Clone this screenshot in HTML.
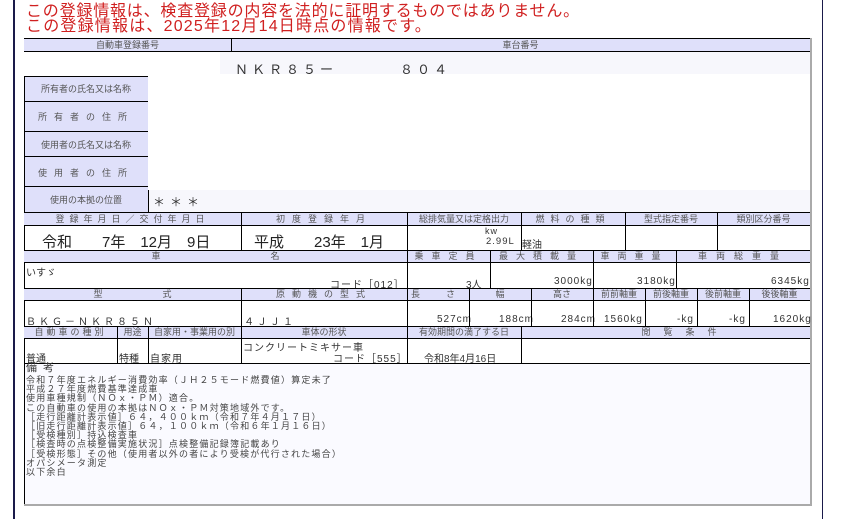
<!DOCTYPE html><html><head><meta charset="utf-8"><style>
*{margin:0;padding:0;box-sizing:border-box}
body{width:849px;height:519px;background:#fff;position:relative;overflow:hidden;font-family:"Liberation Sans","Noto Sans CJK JP",sans-serif;color:#333}
div{position:absolute}
.h{background:#dfe0fa;font-size:9px;color:#555;text-align:center;line-height:12px;white-space:nowrap}
.l{background:#dfe0fa;font-size:9px;color:#555;text-align:center;white-space:nowrap}
.v{font-size:10px;color:#333;white-space:nowrap}
.hl{height:1px;background:#000}
.vl{width:1px;background:#000}
.red{color:#d02020;font-size:16px;line-height:14px;left:26px;white-space:nowrap}
.b{font-size:9px;line-height:9.2px;color:#444;letter-spacing:1.2px;white-space:nowrap}
</style></head><body>
<div style="left:13px;top:0;width:2px;height:519px;background:#1a1a4a"></div>
<div style="left:822px;top:0;width:1px;height:519px;background:#1a1a4a"></div>
<div class="red" style="top:5px;letter-spacing:0.8px">この登録情報は、検査登録の内容を法的に証明するものではありません。</div>
<div class="red" style="top:20px;letter-spacing:1.2px">この登録情報は、2025年12月14日時点の情報です。</div>
<div style="left:810px;top:38px;width:2px;height:467px;background:#aaa"></div>
<div style="left:24px;top:504px;width:788px;height:2px;background:#aaa"></div>
<div style="left:24px;top:363px;width:786px;height:141px;background:#fafaff"></div>
<div class="h" style="left:24px;top:38px;width:786px;height:13px"></div>
<div class="h" style="left:24px;top:39px;width:207px">自動車登録番号</div>
<div class="h" style="left:231px;top:39px;width:579px">車台番号</div>
<div class="hl" style="left:24px;top:38px;width:786px"></div>
<div class="hl" style="left:24px;top:51px;width:786px"></div>
<div class="vl" style="left:231px;top:38px;height:36px"></div>
<div style="left:220px;top:52px;width:590px;height:22px;background:#f7f7fc"></div>
<div class="v" style="left:235px;top:59px;font-size:13px;letter-spacing:4px">ＮＫＲ８５ー</div>
<div class="v" style="left:400px;top:59px;font-size:13px;letter-spacing:4px">８０４</div>
<div class="l" style="left:24px;top:76px;width:124px;height:136px"></div>
<div class="hl" style="left:24px;top:76px;width:124px"></div>
<div class="l" style="left:24px;top:82px;width:124px;background:none">所有者の氏名又は名称</div>
<div class="hl" style="left:24px;top:101px;width:124px"></div>
<div class="l" style="left:24px;top:110px;width:124px;background:none;letter-spacing:7px">所有者の住所</div>
<div class="hl" style="left:24px;top:131px;width:124px"></div>
<div class="l" style="left:24px;top:138px;width:124px;background:none">使用者の氏名又は名称</div>
<div class="hl" style="left:24px;top:156px;width:124px"></div>
<div class="l" style="left:24px;top:166px;width:124px;background:none;letter-spacing:7px">使用者の住所</div>
<div class="hl" style="left:24px;top:186px;width:124px"></div>
<div class="l" style="left:24px;top:193px;width:124px;background:none">使用の本拠の位置</div>
<div class="vl" style="left:24px;top:76px;height:136px"></div>
<div class="vl" style="left:148px;top:190px;height:22px"></div>
<div style="left:149px;top:190px;width:661px;height:22px;background:#f7f7fc"></div>
<div class="v" style="left:153px;top:193px;font-size:12px;letter-spacing:5px">＊＊＊</div>
<div class="vl" style="left:24px;top:212px;height:151px"></div>
<div class="h" style="left:24px;top:212px;width:786px;height:13px"></div>
<div class="h" style="left:24px;top:213px;width:217px;letter-spacing:5px">登録年月日／交付年月日</div>
<div class="h" style="left:241px;top:213px;width:166px;letter-spacing:7px">初度登録年月</div>
<div class="h" style="left:407px;top:213px;width:114px">総排気量又は定格出力</div>
<div class="h" style="left:521px;top:213px;width:104px;letter-spacing:6px">燃料の種類</div>
<div class="h" style="left:625px;top:213px;width:92px">型式指定番号</div>
<div class="h" style="left:717px;top:213px;width:93px">類別区分番号</div>
<div class="v" style="left:42px;top:231px;font-size:15px;color:#222">令和　　7年　12月　9日</div>
<div class="v" style="left:254px;top:231px;font-size:15px;color:#222">平成　　23年　1月</div>
<div class="v" style="left:485px;top:226px;font-size:9px;letter-spacing:1px">kw</div>
<div class="v" style="left:486px;top:236px;font-size:9.5px;letter-spacing:1px">2.99L</div>
<div class="v" style="left:522px;top:236px;font-size:10px">軽油</div>
<div class="h" style="left:24px;top:250px;width:786px;height:12px"></div>
<div class="h" style="left:24px;top:250px;width:383px;letter-spacing:110px;padding-left:110px">車名</div>
<div class="h" style="left:407px;top:250px;width:83px;letter-spacing:8px">乗車定員</div>
<div class="h" style="left:490px;top:250px;width:103px;letter-spacing:8px">最大積載量</div>
<div class="h" style="left:593px;top:250px;width:83px;letter-spacing:8px">車両重量</div>
<div class="h" style="left:676px;top:250px;width:134px;letter-spacing:9px">車両総重量</div>
<div class="v" style="left:26px;top:264px;font-size:10px">いすゞ</div>
<div class="v" style="left:330px;top:276px;font-size:10px;letter-spacing:1px">コード［012］</div>
<div class="v" style="left:466px;top:276px">3人</div>
<div class="v" style="left:554px;top:276px;letter-spacing:1px">3000kg</div>
<div class="v" style="left:637px;top:276px;letter-spacing:1px">3180kg</div>
<div class="v" style="left:771px;top:276px;letter-spacing:1px">6345kg</div>
<div class="h" style="left:24px;top:288px;width:786px;height:12px"></div>
<div class="h" style="left:24px;top:288px;width:217px;letter-spacing:60px;padding-left:60px">型式</div>
<div class="h" style="left:241px;top:288px;width:166px;letter-spacing:7px">原動機の型式</div>
<div class="h" style="left:407px;top:288px;width:62px;text-align:left;padding-left:4px;letter-spacing:26px">長さ</div>
<div class="h" style="left:469px;top:288px;width:62px">幅</div>
<div class="h" style="left:531px;top:288px;width:62px">高さ</div>
<div class="h" style="left:593px;top:288px;width:52px">前前軸重</div>
<div class="h" style="left:645px;top:288px;width:52px">前後軸重</div>
<div class="h" style="left:697px;top:288px;width:52px">後前軸重</div>
<div class="h" style="left:749px;top:288px;width:61px">後後軸重</div>
<div class="v" style="left:26px;top:313px;letter-spacing:3px">ＢＫＧ－ＮＫＲ８５Ｎ</div>
<div class="v" style="left:244px;top:313px;letter-spacing:3px">４ＪＪ１</div>
<div class="v" style="left:437px;top:314px;letter-spacing:1px">527cm</div>
<div class="v" style="left:499px;top:314px;letter-spacing:1px">188cm</div>
<div class="v" style="left:561px;top:314px;letter-spacing:1px">284cm</div>
<div class="v" style="left:604px;top:314px;letter-spacing:1px">1560kg</div>
<div class="v" style="left:677px;top:314px;letter-spacing:1px">-kg</div>
<div class="v" style="left:729px;top:314px;letter-spacing:1px">-kg</div>
<div class="v" style="left:773px;top:314px;letter-spacing:1px">1620kg</div>
<div class="h" style="left:24px;top:326px;width:652px;height:12px"></div>
<div class="h" style="left:24px;top:326px;width:93px;letter-spacing:3px">自動車の種別</div>
<div class="h" style="left:117px;top:326px;width:31px">用途</div>
<div class="h" style="left:148px;top:326px;width:93px">自家用・事業用の別</div>
<div class="h" style="left:241px;top:326px;width:166px">車体の形状</div>
<div class="h" style="left:407px;top:326px;width:114px">有効期間の満了する日</div>
<div class="h" style="left:521px;top:326px;width:289px;letter-spacing:13px;padding-left:40px">閲覧条件</div>
<div class="v" style="left:26px;top:350px">普通</div>
<div class="v" style="left:119px;top:350px">特種</div>
<div class="v" style="left:150px;top:350px;letter-spacing:1px">自家用</div>
<div class="v" style="left:243px;top:339px;letter-spacing:1px">コンクリートミキサー車</div>
<div class="v" style="left:333px;top:350px;letter-spacing:1px">コード［555］</div>
<div class="v" style="left:424px;top:350px">令和8年4月16日</div>
<div class="hl" style="left:24px;top:212px;width:786px"></div>
<div class="hl" style="left:24px;top:225px;width:786px"></div>
<div class="hl" style="left:24px;top:250px;width:786px"></div>
<div class="hl" style="left:24px;top:262px;width:786px"></div>
<div class="hl" style="left:24px;top:288px;width:786px"></div>
<div class="hl" style="left:24px;top:300px;width:786px"></div>
<div class="hl" style="left:24px;top:326px;width:786px"></div>
<div class="hl" style="left:24px;top:338px;width:786px"></div>
<div class="hl" style="left:24px;top:363px;width:786px"></div>
<div class="vl" style="left:241px;top:212px;height:38px"></div>
<div class="vl" style="left:407px;top:212px;height:151px"></div>
<div class="vl" style="left:521px;top:212px;height:38px"></div>
<div class="vl" style="left:625px;top:212px;height:38px"></div>
<div class="vl" style="left:717px;top:212px;height:38px"></div>
<div class="vl" style="left:490px;top:250px;height:38px"></div>
<div class="vl" style="left:593px;top:250px;height:76px"></div>
<div class="vl" style="left:676px;top:250px;height:38px"></div>
<div class="vl" style="left:241px;top:288px;height:75px"></div>
<div class="vl" style="left:469px;top:288px;height:38px"></div>
<div class="vl" style="left:531px;top:288px;height:38px"></div>
<div class="vl" style="left:645px;top:288px;height:38px"></div>
<div class="vl" style="left:697px;top:288px;height:38px"></div>
<div class="vl" style="left:749px;top:288px;height:38px"></div>
<div class="vl" style="left:117px;top:326px;height:37px"></div>
<div class="vl" style="left:148px;top:326px;height:37px"></div>
<div class="vl" style="left:521px;top:326px;height:37px"></div>
<div class="vl" style="left:24px;top:363px;height:141px"></div>
<div class="b" style="left:26px;top:364px;font-size:11px;letter-spacing:6px;color:#333">備考</div>
<div class="b" style="left:26px;top:376px">令和７年度エネルギー消費効率（ＪＨ２５モード燃費値）算定未了<br>平成２７年度燃費基準達成車<br>使用車種規制（ＮＯｘ・ＰＭ）適合。<br>この自動車の使用の本拠はＮＯｘ・ＰＭ対策地域外です。<br>［走行距離計表示値］６４，４００ｋｍ（令和７年４月１７日）<br>［旧走行距離計表示値］６４，１００ｋｍ（令和６年１月１６日）<br>［受検種別］持込検査車<br>［検査時の点検整備実施状況］点検整備記録簿記載あり<br>［受検形態］その他（使用者以外の者により受検が代行された場合）<br>オパシメータ測定<br>以下余白</div>
</body></html>
